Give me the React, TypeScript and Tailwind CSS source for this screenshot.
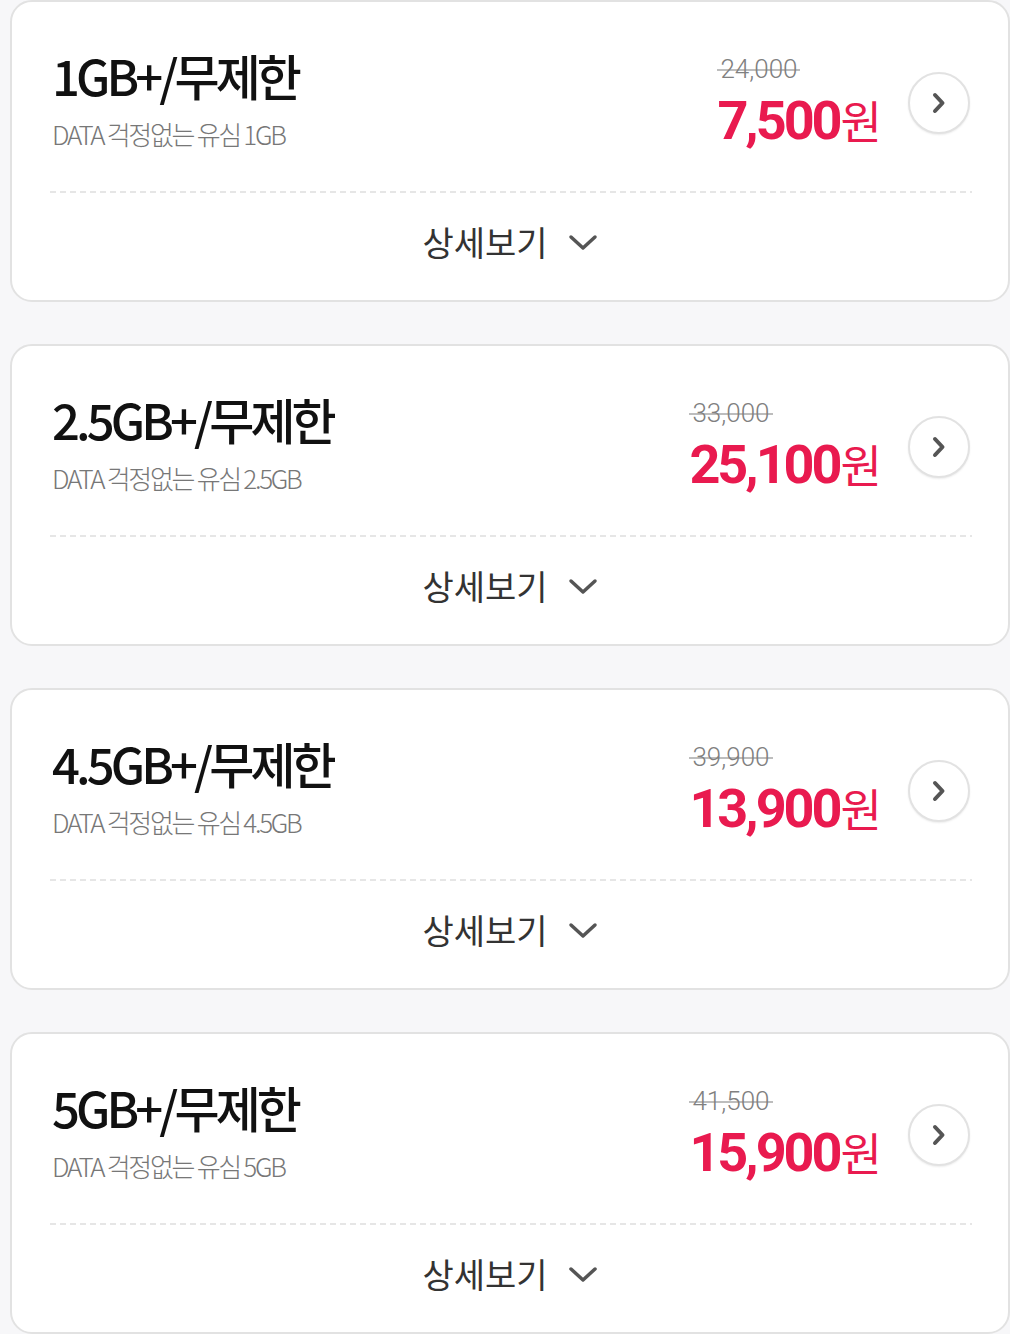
import React from "react";

const plans = [
  { title: "1GB+/무제한", sub: "DATA 걱정없는 유심 1GB", orig: "24,000", price: "7,500" },
  { title: "2.5GB+/무제한", sub: "DATA 걱정없는 유심 2.5GB", orig: "33,000", price: "25,100" },
  { title: "4.5GB+/무제한", sub: "DATA 걱정없는 유심 4.5GB", orig: "39,900", price: "13,900" },
  { title: "5GB+/무제한", sub: "DATA 걱정없는 유심 5GB", orig: "41,500", price: "15,900" },
];

const kr = { fontFamily: '"Noto Sans CJK KR", "Noto Sans", sans-serif' };
const rb = { fontFamily: 'Roboto, "Noto Sans CJK KR", sans-serif' };

function Card({ p }: { p: (typeof plans)[number] }) {
  return (
    <div className="ml-[10px] w-[1000px] h-[302px] shrink-0 rounded-[22px] border-2 border-[#e2e2e2] bg-white flex flex-col">
      <div className="h-[189px] pl-[40px] pr-[38px] flex items-start justify-between">
        <div className="pt-[43px] flex flex-col">
          <div style={kr} className="text-[49px] leading-[60px] font-medium text-[#111] tracking-[-3.9px]">
            {p.title}
          </div>
          <div style={kr} className="mt-[14px] text-[26px] leading-[30px] font-light text-[#777] tracking-[-2.3px]">
            {p.sub}
          </div>
        </div>
        <div className="pt-[52px] flex items-start">
          <div className="flex flex-col items-start">
            <div
              style={rb}
              className="px-[3px] text-[26px] leading-[30px] font-light text-[#808080] tracking-[0px] bg-[linear-gradient(#bdbdbd,#bdbdbd)] bg-no-repeat bg-[length:100%_2px] bg-[position:0_55%]"
            >
              {p.orig}
            </div>
            <div className="mt-[7px] flex items-baseline leading-[58px] text-[#e91a4f]">
              <span style={rb} className="text-[54px] font-bold tracking-[-3px]">
                {p.price}
              </span>
              <span style={kr} className="ml-[1px] text-[45px] font-normal">원</span>
            </div>
          </div>
          <div className="ml-[26px] mt-[18px] w-[62px] h-[62px] rounded-full border-2 border-[#e2e2e2] bg-white shadow-[0_1px_2px_rgba(0,0,0,0.08)] flex items-center justify-center">
            <svg width="14" height="22" viewBox="0 0 14 22" fill="none">
              <path d="M3 3 L10.5 11 L3 19" stroke="#555" strokeWidth="4" strokeLinecap="round" strokeLinejoin="round" />
            </svg>
          </div>
        </div>
      </div>
      <div className="ml-[38px] mr-[36px] h-[2px] bg-[repeating-linear-gradient(90deg,#e6e6e6_0_6px,transparent_6px_10px)]" />
      <div className="flex-1 flex items-center justify-center pb-[9px]">
        <span style={kr} className="text-[34px] leading-[40px] text-[#333] tracking-[0px]">
          상세보기
        </span>
        <svg className="ml-[20px] mt-[2px]" width="30" height="18" viewBox="0 0 30 18" fill="none">
          <path d="M3 3 L15 14 L27 3" stroke="#555" strokeWidth="3.5" strokeLinecap="round" strokeLinejoin="round" />
        </svg>
      </div>
    </div>
  );
}

export default function App() {
  return (
    <div className="w-[1010px] h-[1334px] overflow-hidden bg-[#f7f7f9] flex flex-col gap-[42px]">
      {plans.map((p) => (
        <Card key={p.title} p={p} />
      ))}
    </div>
  );
}
